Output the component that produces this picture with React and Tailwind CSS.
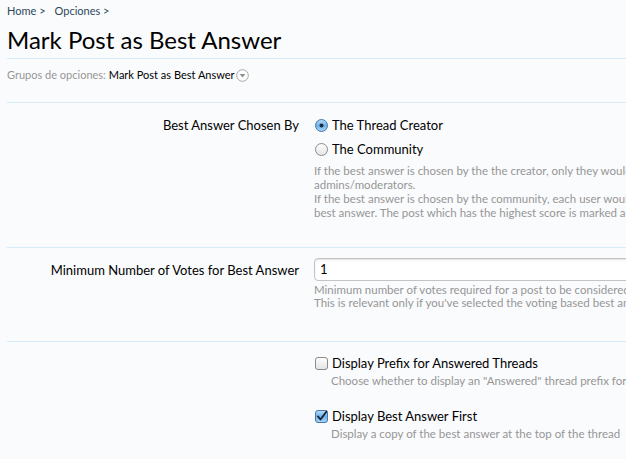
import React from 'react'

const FONT = "font-['Lato','Open_Sans',sans-serif]"

function Radio({ checked }) {
  return (
    <svg width="13" height="13" viewBox="0 0 13 13" className="shrink-0">
      <defs>
        <linearGradient id={checked ? 'rOn' : 'rOff'} x1="0" y1="0" x2="0" y2="1">
          {checked ? (
            <>
              <stop offset="0" stopColor="#b9dcf7" />
              <stop offset="0.5" stopColor="#6fb2ea" />
              <stop offset="1" stopColor="#a9d6fa" />
            </>
          ) : (
            <>
              <stop offset="0" stopColor="#ffffff" />
              <stop offset="1" stopColor="#e4e4e4" />
            </>
          )}
        </linearGradient>
      </defs>
      <circle cx="6.5" cy="6.5" r="6" fill={`url(#${checked ? 'rOn' : 'rOff'})`} stroke={checked ? '#4a78a8' : '#8a8a8a'} strokeWidth="1" />
      {checked && <circle cx="6.5" cy="6.5" r="2" fill="#1d2a3a" />}
    </svg>
  )
}

function Check({ checked }) {
  return (
    <svg width="13" height="13" viewBox="0 0 13 13" className="shrink-0">
      <defs>
        <linearGradient id={checked ? 'cOn' : 'cOff'} x1="0" y1="0" x2="0" y2="1">
          {checked ? (
            <>
              <stop offset="0" stopColor="#b9dcf7" />
              <stop offset="0.5" stopColor="#6fb2ea" />
              <stop offset="1" stopColor="#a9d6fa" />
            </>
          ) : (
            <>
              <stop offset="0" stopColor="#ffffff" />
              <stop offset="1" stopColor="#e2e2e2" />
            </>
          )}
        </linearGradient>
      </defs>
      <rect x="0.5" y="0.5" width="12" height="12" rx="2.5" fill={`url(#${checked ? 'cOn' : 'cOff'})`} stroke={checked ? '#4a78a8' : '#8a8a8a'} />
      {checked && <path d="M3 6.5 L5.5 9.5 L11.5 1.5" fill="none" stroke="#142033" strokeWidth="1.8" strokeLinecap="round" strokeLinejoin="round" />}
    </svg>
  )
}

function Row({ label, children, className }) {
  return (
    <div className={`flex ${className || ''}`}>
      <div className="w-[292px] shrink-0 text-right text-[13px] leading-[16px] text-black">{label}</div>
      <div className="ml-[15px] flex-1">{children}</div>
    </div>
  )
}

export default function App() {
  return (
    <div className={`w-[626px] h-[459px] overflow-hidden bg-[#fafbfd] ${FONT}`}>
      <div className="w-[1000px] pl-[7px]">
        <div className="h-[22px] pt-[4px] text-[11px] leading-[14px] text-[#2b485c] flex">
          <span>Home &gt;</span>
          <span className="ml-[9px]">Opciones &gt;</span>
        </div>
        <h1 className="h-[36px] text-[24px] leading-[36px] text-black">Mark Post as Best Answer</h1>
        <div className="border-t border-[#d7ebf8]" />
        <div className="h-[43px] pt-[9px]">
          <div className="flex items-center h-[14px] text-[11px] leading-[14px]">
            <span className="text-[#969696]">Grupos de opciones:</span>
            <span className="ml-[3px] text-black">Mark Post as Best Answer</span>
            <svg width="13" height="13" viewBox="0 0 13 13" className="ml-[1px]">
              <circle cx="6.5" cy="6.5" r="5.8" fill="#fff" stroke="#a6a6a6" />
              <path d="M3.6 5 L9.4 5 L6.5 8.4 Z" fill="#8f8f8f" />
            </svg>
          </div>
        </div>
        <div className="border-t border-[#d7ebf8]" />

        <div className="h-[144px] pt-[14px]">
          <Row label="Best Answer Chosen By">
            <div className="flex flex-col gap-[8px] text-[13px] leading-[16px] text-black">
              <label className="flex items-center gap-[4px] ml-[1px]"><Radio checked />The Thread Creator</label>
              <label className="flex items-center gap-[4px] ml-[1px]"><Radio />The Community</label>
            </div>
            <div className="mt-[7px] text-[11.5px] leading-[14px] text-[#969696]">
              <div>If the best answer is chosen by the the creator, only they would be able to mark a post as the best answer, in addition to</div>
              <div>admins/moderators.</div>
              <div>If the best answer is chosen by the community, each user would be able to vote for the post they feel is the</div>
              <div>best answer. The post which has the highest score is marked as the best answer.</div>
            </div>
          </Row>
        </div>
        <div className="border-t border-[#d7ebf8]" />

        <div className="h-[93px] pt-[10px]">
          <div className="flex">
            <div className="w-[292px] shrink-0 h-[23px] flex items-center justify-end text-[13px] leading-[16px] text-black">Minimum Number of Votes for Best Answer</div>
            <div className="ml-[15px] flex-1">
              <div className="h-[23px] rounded-[4px] border border-[#c4c4c4] bg-white shadow-[inset_0_1px_2px_rgba(0,0,0,0.12)] flex items-center pl-[5px] text-[13px] text-black">1</div>
              <div className="mt-[2px] text-[11.5px] leading-[13px] text-[#969696]">
                <div>Minimum number of votes required for a post to be considered as the best answer.</div>
                <div>This is relevant only if you've selected the voting based best answer method.</div>
              </div>
            </div>
          </div>
        </div>
        <div className="border-t border-[#d7ebf8]" />

        <div className="pt-[13px]">
          <Row label="">
            <label className="flex items-center gap-[4px] ml-[1px] text-[13px] leading-[16px] text-black"><Check />Display Prefix for Answered Threads</label>
            <div className="mt-[3px] ml-[17px] text-[11.5px] leading-[14px] text-[#969696]">Choose whether to display an "Answered" thread prefix for answered threads</div>
            <label className="mt-[20px] flex items-center gap-[4px] ml-[1px] text-[13px] leading-[16px] text-black"><Check checked />Display Best Answer First</label>
            <div className="mt-[3px] ml-[17px] text-[11.5px] leading-[14px] text-[#969696]">Display a copy of the best answer at the top of the thread</div>
          </Row>
        </div>
      </div>
    </div>
  )
}
